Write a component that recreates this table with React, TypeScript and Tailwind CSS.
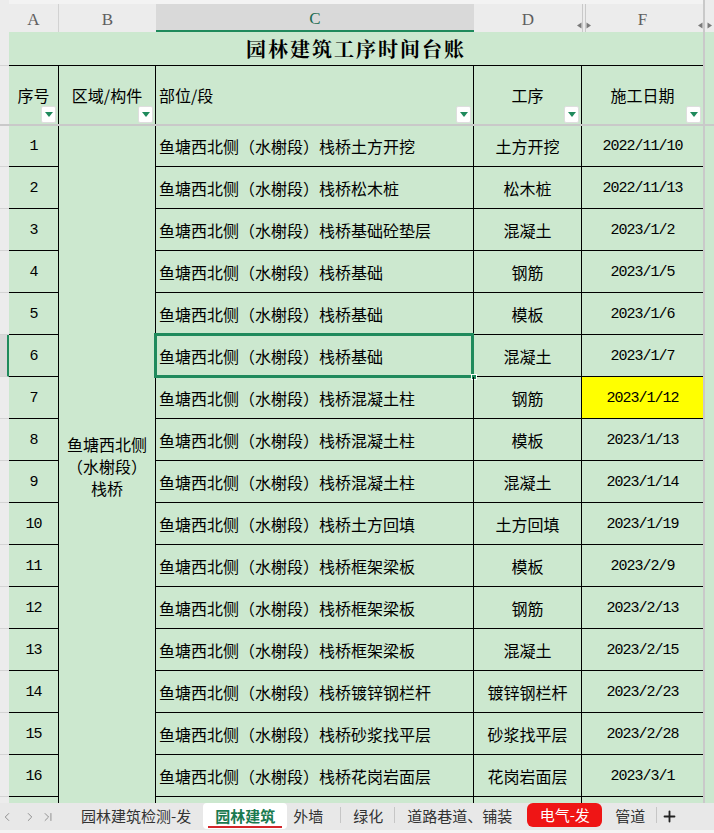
import { Fragment } from "react";
import { ChevronLast, ChevronLeft, ChevronRight, Plus } from "lucide-react";

const cjk = "font-['Noto_Sans_CJK_SC',sans-serif]";
const mono = "font-['Liberation_Mono','Noto_Sans_CJK_SC',monospace] tracking-[-1px] text-[15px] pt-[3px]";

const prefix = "鱼塘西北侧（水榭段）栈桥";

const rows = [
  ["土方开挖", "土方开挖", "2022/11/10"],
  ["松木桩", "松木桩", "2022/11/13"],
  ["基础砼垫层", "混凝土", "2023/1/2"],
  ["基础", "钢筋", "2023/1/5"],
  ["基础", "模板", "2023/1/6"],
  ["基础", "混凝土", "2023/1/7"],
  ["混凝土柱", "钢筋", "2023/1/12"],
  ["混凝土柱", "模板", "2023/1/13"],
  ["混凝土柱", "混凝土", "2023/1/14"],
  ["土方回填", "土方回填", "2023/1/19"],
  ["框架梁板", "模板", "2023/2/9"],
  ["框架梁板", "钢筋", "2023/2/13"],
  ["框架梁板", "混凝土", "2023/2/15"],
  ["镀锌钢栏杆", "镀锌钢栏杆", "2023/2/23"],
  ["砂浆找平层", "砂浆找平层", "2023/2/28"],
  ["花岗岩面层", "花岗岩面层", "2023/3/1"],
];

const FilterButton = () => (
  <span className="absolute bottom-[1px] right-[2px] flex h-[17px] w-[15px] items-center justify-center rounded-[2px] border border-[#dedede] bg-white">
    <svg width="8" height="5" viewBox="0 0 8 5">
      <path d="M0 0h8L4 5z" fill="#1f8a5c" />
    </svg>
  </span>
);

const HiddenMark = ({ lines }: { lines: boolean }) => (
  <svg
    width="16"
    height="28"
    viewBox="0 0 16 28"
    className="absolute bottom-0 right-[-10px] z-10"
  >
    {lines && (
      <>
        <line x1="6.5" y1="0" x2="6.5" y2="28" stroke="#c9c9c9" />
        <line x1="9.5" y1="0" x2="9.5" y2="28" stroke="#c9c9c9" />
      </>
    )}
    <path d="M1 21.5 5.5 18.5v6z" fill="#7a7a7a" />
    <path d="M15 21.5 10.5 18.5v6z" fill="#7a7a7a" />
  </svg>
);

const ColHead = ({
  label,
  active,
  extra,
  children,
}: {
  label: string;
  active?: boolean;
  extra?: string;
  children?: React.ReactNode;
}) => (
  <div className="relative bg-[#f3f3f3] pt-[4px]">
    <div
      className={`flex h-full items-center justify-center pt-[3px] font-['Liberation_Serif',serif] text-[17px] ${
        active
          ? "border-b-2 border-[#1f8a5c] bg-[#d9d9d9] text-[#1d6b52]"
          : "bg-[#ececec] text-[#5f5f5f]"
      } ${extra ?? ""}`}
    >
      {label}
    </div>
    {children}
  </div>
);

const Sep = () => <div className="mt-[4px] h-[16px] w-px self-start bg-[#c6c6c6]" />;

const App = () => {
  return (
    <div className={`h-[833px] w-[714px] overflow-hidden bg-white text-black ${cjk}`}>
      <div className="grid grid-cols-[9px_50px_97px_318px_108px_121px_2px_9px] grid-rows-[32px_34px_58px_2px_41px_repeat(15,42px)_6px] bg-[#cce8cf]">
        {/* column letters */}
        <div className="bg-[#ececec]" />
        <ColHead label="A" extra="border-r border-[#d2d2d2]" />
        <ColHead label="B" />
        <ColHead label="C" active />
        <ColHead label="D">
          <HiddenMark lines />
        </ColHead>
        <ColHead label="F">
          <HiddenMark lines={false} />
        </ColHead>
        <div className="bg-[#c9c9c9]" />
        <div className="bg-[#ececec]" />

        {/* title */}
        <div className="border-b border-[#d4d4d4] bg-[#ececec]" />
        <div className="col-span-5 flex items-center justify-center border-b border-black pt-[1px] font-['Noto_Serif_CJK_SC','Noto_Sans_CJK_SC',serif] text-[20px] font-bold tracking-[2px]">
          园林建筑工序时间台账
        </div>
        <div className="bg-[#c9c9c9]" />
        <div />

        {/* header */}
        <div className="bg-[#ececec]" />
        <div className="relative flex items-center justify-center border-r border-black text-[16px]">
          序号
          <FilterButton />
        </div>
        <div className="relative flex items-center justify-center border-r border-black text-[16px]">
          区域/构件
          <FilterButton />
        </div>
        <div className="relative flex items-center border-r border-black pl-[3px] text-[16px]">
          部位/段
          <FilterButton />
        </div>
        <div className="relative flex items-center justify-center border-r border-black text-[16px]">
          工序
          <FilterButton />
        </div>
        <div className="relative flex items-center justify-center text-[16px]">
          施工日期
          <FilterButton />
        </div>
        <div className="bg-[#c9c9c9]" />
        <div />

        {/* freeze line */}
        <div className="col-span-full bg-[#c9c9c9]" />

        {rows.map(([part, step, date], i) => (
          <Fragment key={i}>
            <div
              className={`border-b border-[#d4d4d4] ${
                i === 5 ? "border-r-2 border-r-[#1f8a5c] bg-[#d9d9d9]" : "bg-[#ececec]"
              }`}
            />
            <div className={`flex items-center justify-center border-b border-r border-black ${mono}`}>
              {i + 1}
            </div>
            {i === 0 && (
              <div className="row-span-17 flex items-center justify-center border-r border-black pt-[2px] text-center text-[16px] leading-[22px]">
                鱼塘西北侧
                <br />
                （水榭段）
                <br />
                栈桥
              </div>
            )}
            <div className="relative flex items-center border-b border-r border-black pl-[3px] text-[16px]">
              {prefix}
              {part}
              {i === 5 && (
                <>
                  <div className="absolute bottom-[-2px] left-[-2px] right-[-1px] top-[-2px] border-[3px] border-[#1f8a5c]" />
                  <div className="absolute bottom-[-4px] right-[-4px] h-[6px] w-[6px] border border-white bg-[#1f8a5c]" />
                </>
              )}
            </div>
            <div className="flex items-center justify-center border-b border-r border-black text-[16px]">
              {step}
            </div>
            <div
              className={`flex items-center justify-center border-b border-black ${mono} ${
                i === 6 ? "bg-[#ffff00]" : ""
              }`}
            >
              {date}
            </div>
            <div className="bg-[#c9c9c9]" />
            <div />
          </Fragment>
        ))}

        {/* partial row 17 */}
        <div className="bg-[#ececec]" />
        <div className="border-r border-black" />
        <div className="border-r border-black" />
        <div className="border-r border-black" />
        <div />
        <div className="bg-[#c9c9c9]" />
        <div />
      </div>

      {/* sheet tabs */}
      <div className="flex h-[30px] items-stretch border-b-[3px] border-[#f4f4f4] bg-[#e8e8e8] text-[15px] text-[#333]">
        <div className="flex items-center text-[#8a8a8a]">
          <ChevronLeft size={14} strokeWidth={1.6} />
          <ChevronRight size={14} strokeWidth={1.6} className="ml-[9px]" />
          <ChevronLast size={14} strokeWidth={1.6} className="ml-[4px]" />
        </div>
        <div className="flex items-center pl-[26px] pr-[12px]">园林建筑检测-发</div>
        <div className="relative flex h-[26px] w-[84px] items-center justify-center self-start rounded-[4px] bg-white font-semibold text-[#1a7a50]">
          园林建筑
          <div className="absolute bottom-[1px] left-[5px] right-[5px] h-[2px] bg-[#d4252a]" />
        </div>
        <div className="flex items-center pl-[6px] pr-[17px]">外墙</div>
        <Sep />
        <div className="flex items-center pl-[12px] pr-[11px]">绿化</div>
        <Sep />
        <div className="flex items-center pl-[12px] pr-[15px]">道路巷道、铺装</div>
        <div className="flex h-[24px] w-[75px] items-center justify-center self-start rounded-[6px] bg-[#ef1515] text-white">
          电气-发
        </div>
        <div className="flex items-center pl-[13px] pr-[11px]">管道</div>
        <Sep />
        <div className="flex items-center pl-[4px] text-[#222]">
          <Plus size={17} strokeWidth={2.6} />
        </div>
      </div>
    </div>
  );
};

export default App;
